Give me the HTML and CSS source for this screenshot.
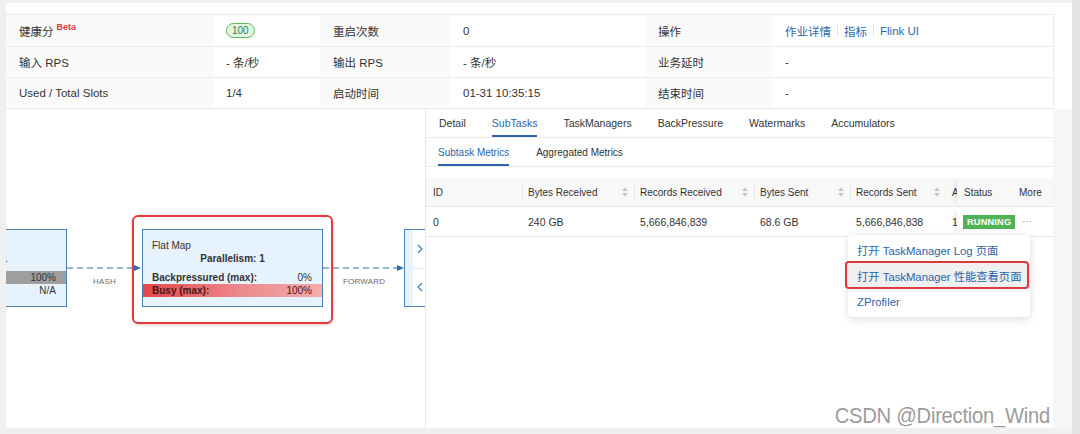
FILE: index.html
```html
<!DOCTYPE html>
<html lang="zh-CN">
<head>
<meta charset="utf-8">
<title>Job</title>
<link rel="stylesheet" href="styles.css">
</head>
<body>
<div class="page">
  <div class="main">
    <div class="card">
      <div class="info">
        <div class="cell lab">健康分<span class="beta">Beta</span></div>
        <div class="cell"><span class="score">100</span></div>
        <div class="cell lab">重启次数</div>
        <div class="cell">0</div>
        <div class="cell lab">操作</div>
        <div class="cell links"><a>作业详情</a><span class="sep"></span><a>指标</a><span class="sep"></span><a>Flink UI</a></div>

        <div class="cell lab">输入 RPS</div>
        <div class="cell">- 条/秒</div>
        <div class="cell lab">输出 RPS</div>
        <div class="cell">- 条/秒</div>
        <div class="cell lab">业务延时</div>
        <div class="cell">-</div>

        <div class="cell lab">Used / Total Slots</div>
        <div class="cell">1/4</div>
        <div class="cell lab">启动时间</div>
        <div class="cell">01-31 10:35:15</div>
        <div class="cell lab">结束时间</div>
        <div class="cell">-</div>
      </div>

      <div class="lower">
        <div class="graph">
          <svg class="edges" width="419" height="319" viewBox="0 0 419 319">
            <line x1="61" y1="159" x2="130" y2="159" class="dash"/>
            <polygon points="128,156 135,159 128,162" class="head"/>
            <line x1="317" y1="159" x2="392" y2="159" class="dash"/>
            <polygon points="391,156 398,159 391,162" class="head"/>
          </svg>
          <div class="elabel hash">HASH</div>
          <div class="elabel fwd">FORWARD</div>

          <div class="node left-node">
            <div class="title">&nbsp;</div>
            <div class="par"><span class="tail">1</span></div>
            <div class="row grey first"><span></span><span class="v">100%</span></div>
            <div class="row"><span></span><span class="v">N/A</span></div>
          </div>

          <div class="node flat-node">
            <div class="title">Flat Map</div>
            <div class="par">Parallelism: 1</div>
            <div class="row first"><span>Backpressured (max):</span><span class="v">0%</span></div>
            <div class="row busy"><span>Busy (max):</span><span class="v">100%</span></div>
          </div>

          <div class="node right-node">
            <div class="btns">
              <div class="half"><svg width="6" height="10" viewBox="0 0 6 10"><polyline points="1,1 5,5 1,9"/></svg></div>
              <div class="half split"><svg width="6" height="10" viewBox="0 0 6 10"><polyline points="5,1 1,5 5,9"/></svg></div>
            </div>
          </div>

          <div class="focus"></div>
        </div>

        <div class="panel">
          <div class="tabs">
            <div class="tab">Detail</div>
            <div class="tab active">SubTasks</div>
            <div class="tab">TaskManagers</div>
            <div class="tab">BackPressure</div>
            <div class="tab">Watermarks</div>
            <div class="tab">Accumulators</div>
          </div>
          <div class="subtabs">
            <div class="sub active">Subtask Metrics</div>
            <div class="sub">Aggregated Metrics</div>
          </div>

          <div class="grid thead">
            <div class="th">ID</div>
            <div class="th div">Bytes Received<svg class="sort" width="6" height="10" viewBox="0 0 6 10"><polygon points="0,4 3,0.5 6,4"/><polygon points="0,6 3,9.5 6,6"/></svg></div>
            <div class="th div">Records Received<svg class="sort" width="6" height="10" viewBox="0 0 6 10"><polygon points="0,4 3,0.5 6,4"/><polygon points="0,6 3,9.5 6,6"/></svg></div>
            <div class="th div">Bytes Sent<svg class="sort" width="6" height="10" viewBox="0 0 6 10"><polygon points="0,4 3,0.5 6,4"/><polygon points="0,6 3,9.5 6,6"/></svg></div>
            <div class="th div">Records Sent<svg class="sort" width="6" height="10" viewBox="0 0 6 10"><polygon points="0,4 3,0.5 6,4"/><polygon points="0,6 3,9.5 6,6"/></svg></div>
            <div class="th cut">A</div>
            <div class="th fixed">Status</div>
            <div class="th more-h">More</div>
          </div>
          <div class="grid trow">
            <div class="td">0</div>
            <div class="td">240 GB</div>
            <div class="td">5,666,846,839</div>
            <div class="td">68.6 GB</div>
            <div class="td">5,666,846,838</div>
            <div class="td cut">1</div>
            <div class="td fixed"><span class="run">RUNNING</span></div>
            <div class="td more">···</div>
          </div>

          <div class="menu">
            <div class="item">打开 TaskManager Log 页面</div>
            <div class="item hl">打开 TaskManager 性能查看页面</div>
            <div class="item">ZProfiler</div>
          </div>
        </div>
        <div class="strip"></div>
      </div>

      <div class="watermark">CSDN @Direction_Wind</div>
    </div>
  </div>
  <div class="scroll"></div>
</div>
</body>
</html>
```

FILE: styles.css
```css
* { box-sizing: border-box; }
html, body { margin: 0; padding: 0; }
body {
  width: 1080px;
  height: 434px;
  overflow: hidden;
  background: #f0f0f0;
  font-family: "Liberation Sans", "Noto Sans CJK SC", sans-serif;
  color: #333;
}
.page { display: flex; height: 434px; }
.main { flex: 1; padding: 3px 0 6px 6px; }
.scroll { width: 8px; background: #e3e3e3; }

.card {
  position: relative;
  background: #fff;
  height: 425px;
  padding-top: 11px;
  display: flex;
  flex-direction: column;
}

/* info table */
.info {
  display: grid;
  width: 1048px;
  grid-template-columns: 207px 107px 130px 195px 127px 281px;
  grid-template-rows: 32px 31px 31px;
  border-top: 1px solid #ebebeb;
  border-right: 1px solid #ebebeb;
  font-size: 11.5px;
}
.cell {
  display: flex;
  align-items: center;
  padding-left: 13px;
  border-bottom: 1px solid #ebebeb;
  white-space: nowrap;
}
.lab { background: #fafafa; }
.beta {
  color: #e53935;
  font-size: 9px;
  font-weight: bold;
  margin-left: 3px;
  position: relative;
  top: -4px;
}
.score {
  display: inline-block;
  font-size: 10px;
  line-height: 13px;
  padding: 0 5px;
  border: 1px solid #5cb85c;
  background: #e4f4e4;
  color: #2e7d32;
  border-radius: 8px;
}
.links a { color: #2d67ad; }
.sep { display: inline-block; width: 1px; height: 11px; background: #e2e2e2; margin: 0 6px; }

/* lower */
.lower { flex: 1; display: flex; min-height: 0; }
.graph { width: 419px; position: relative; overflow: hidden; background: #fff; }
.panel { width: 628px; border-left: 1px solid #e8e8e8; position: relative; background: #fff; }
.strip { flex: 1; background: #f6f6f6; }

/* graph */
.edges { position: absolute; left: 0; top: 0; }
.dash { stroke: #2f6aa8; stroke-width: 1; stroke-dasharray: 6 4; }
.head { fill: #2f6aa8; }
.elabel {
  position: absolute;
  top: 167px;
  font-size: 8px;
  line-height: 12px;
  color: #6a6a6a;
  letter-spacing: 0.2px;
}
.hash { left: 87px; }
.fwd { left: 337px; }

.node {
  position: absolute;
  top: 120px;
  width: 181px;
  height: 78px;
  border: 1px solid #4c80b6;
  background: #e6f2fc;
  padding: 9px 0;
  font-size: 10px;
  line-height: 13px;
  color: #333;
  white-space: nowrap;
}
.left-node { left: -120px; }
.left-node .par { text-align: right; padding-right: 59px; }
.flat-node { left: 136px; }
.title { padding-left: 9px; }
.par { text-align: center; font-weight: bold; }
.row {
  display: flex;
  justify-content: space-between;
  padding: 0 10px 0 9px;
  height: 13px;
  font-weight: bold;
}
.row .v { font-weight: normal; }
.row.first { margin-top: 6px; }
.row.grey { background: #9e9e9e; }
.row.busy { background: linear-gradient(90deg, #e3474b 0%, #ec8a8c 55%, #f3acac 100%); color: #4a1414; }

.right-node { left: 398px; width: 60px; padding: 0; }
.btns {
  margin-left: 8px;
  height: 100%;
  background: #fff;
  display: flex;
  flex-direction: column;
}
.half { flex: 1; display: flex; align-items: center; padding-left: 4px; }
.half.split { border-top: 1px solid #e4ebf2; }
.half svg polyline { fill: none; stroke: #3a75b0; stroke-width: 1.1; }

.focus {
  position: absolute;
  left: 126px;
  top: 106px;
  width: 201px;
  height: 109px;
  border: 2.5px solid #e0393e;
  border-radius: 6px;
  box-shadow: 0 1px 3px rgba(200, 40, 40, 0.25);
}

/* panel tabs */
.tabs {
  display: flex;
  gap: 26px;
  height: 29px;
  padding-left: 13px;
  border-bottom: 1px solid #ebebeb;
  font-size: 10.5px;
}
.tab { display: flex; align-items: center; height: 28px; color: #333; }
.tab.active { color: #2d63a8; box-shadow: inset 0 -2px 0 #2d63a8; }

.subtabs {
  display: flex;
  gap: 27px;
  height: 29px;
  padding-left: 12px;
  border-bottom: 1px solid #ebebeb;
  font-size: 10px;
}
.sub { display: flex; align-items: center; height: 28px; color: #333; }
.sub.active { color: #2d63a8; box-shadow: inset 0 -2px 0 #2d63a8; }

.grid {
  display: grid;
  grid-template-columns: 96px 112px 120px 96px 96px 11px 55px 41px;
}
.thead {
  margin-top: 11px;
  height: 29px;
  background: #f8f8f8;
  border-bottom: 1px solid #e8e8e8;
  font-size: 10px;
}
.th {
  position: relative;
  display: flex;
  align-items: center;
  justify-content: space-between;
  padding: 0 6px 0 6px;
  white-space: nowrap;
  color: #333;
}
.th:first-child { padding-left: 7px; }
.th.div::before {
  content: "";
  position: absolute;
  left: 0;
  top: 8px;
  width: 1px;
  height: 12px;
  background: #e6e6e6;
}
.sort polygon { fill: #c4c4c4; }
.cut { overflow: hidden; justify-content: flex-start; }
.fixed {
  box-shadow: -5px 0 6px -4px rgba(0, 0, 0, 0.14);
  padding-left: 7px;
  justify-content: flex-start;
}
.thead .fixed { background: #f8f8f8; }
.more-h { padding-left: 7px; justify-content: flex-start; }

.trow {
  height: 30px;
  border-bottom: 1px solid #ebebeb;
  font-size: 10.5px;
}
.td {
  display: flex;
  align-items: center;
  padding-left: 6px;
  white-space: nowrap;
}
.td:first-child { padding-left: 7px; }
.trow .fixed { background: #fff; padding-left: 6px; }
.run {
  display: inline-block;
  background: #52b356;
  color: #fff;
  font-size: 9.2px;
  font-weight: bold;
  line-height: 14px;
  padding: 0 4px;
  letter-spacing: 0.2px;
}
.more { color: #9a9a9a; font-size: 10px; padding-left: 10px; }

/* dropdown */
.menu {
  position: absolute;
  left: 422px;
  top: 126px;
  width: 182px;
  padding: 2px 0;
  background: #fff;
  border-radius: 4px;
  box-shadow: 0 2px 9px rgba(0, 0, 0, 0.14);
  font-size: 11.3px;
}
.item {
  height: 26px;
  display: flex;
  align-items: center;
  padding-left: 9px;
  color: #2b63ab;
  white-space: nowrap;
}
.item.hl { position: relative; background: #f0f0f0; }
.item.hl::after {
  content: "";
  position: absolute;
  left: -3px;
  right: 1px;
  top: -2px;
  bottom: 0;
  border: 2px solid #da3a3c;
  border-radius: 4px;
}

.watermark {
  position: absolute;
  right: 22px;
  top: 401px;
  font-size: 22px;
  line-height: 24px;
  letter-spacing: -0.3px;
  color: #9c9c9c;
  text-shadow: 0 0 2px #fff;
  white-space: nowrap;
  transform: scaleX(0.92);
  transform-origin: right center;
}
```
